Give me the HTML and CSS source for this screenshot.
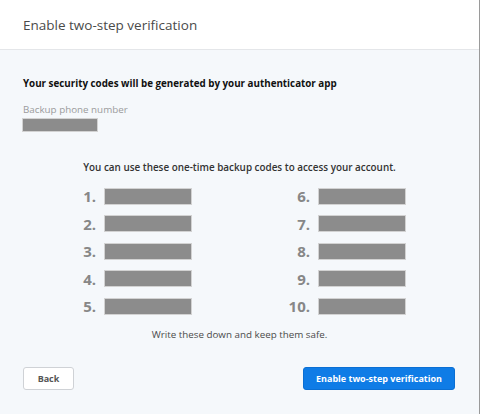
FILE: index.html
```html
<!DOCTYPE html>
<html>
<head>
<meta charset="utf-8">
<link rel="stylesheet" href="styles.css">
</head>
<body>
<div class="dialog">
  <header class="dialog-header">
    <h1 class="title">Enable two-step verification</h1>
  </header>
  <main class="dialog-body">
    <p class="lead">Your security codes will be generated by your authenticator app</p>
    <div class="phone">
      <div class="label">Backup phone number</div>
      <div class="redact phone-redact"></div>
    </div>
    <p class="intro">You can use these one-time backup codes to access your account.</p>
    <div class="codes">
      <div class="code-col">
        <div class="code"><span class="num">1.</span><span class="redact code-redact"></span></div>
        <div class="code"><span class="num">2.</span><span class="redact code-redact"></span></div>
        <div class="code"><span class="num">3.</span><span class="redact code-redact"></span></div>
        <div class="code"><span class="num">4.</span><span class="redact code-redact"></span></div>
        <div class="code"><span class="num">5.</span><span class="redact code-redact"></span></div>
      </div>
      <div class="code-col">
        <div class="code"><span class="num">6.</span><span class="redact code-redact"></span></div>
        <div class="code"><span class="num">7.</span><span class="redact code-redact"></span></div>
        <div class="code"><span class="num">8.</span><span class="redact code-redact"></span></div>
        <div class="code"><span class="num">9.</span><span class="redact code-redact"></span></div>
        <div class="code"><span class="num">10.</span><span class="redact code-redact"></span></div>
      </div>
    </div>
    <p class="note">Write these down and keep them safe.</p>
    <div class="actions">
      <button class="btn btn-secondary">Back</button>
      <button class="btn btn-primary">Enable two-step verification</button>
    </div>
  </main>
</div>
</body>
</html>
```
FILE: styles.css
```css
* { box-sizing: border-box; }
html, body { margin: 0; padding: 0; }
body {
  width: 480px;
  height: 414px;
  overflow: hidden;
  font-family: "Open Sans", "Liberation Sans", sans-serif;
  background: #f5f8fb;
}
.dialog {
  width: 480px;
  height: 414px;
  border-right: 1px solid #9a9a9a;
  background: #f5f8fb;
  display: flex;
  flex-direction: column;
}
.dialog-header {
  height: 50px;
  background: #ffffff;
  border-bottom: 1px solid #e4e6e9;
  display: flex;
  align-items: center;
  padding: 0 23px;
}
.title {
  margin: 0;
  font-size: 13.5px;
  font-weight: 400;
  color: #4a4a4a;
}
.dialog-body {
  flex: 1;
  padding: 26px 23px 0;
  display: flex;
  flex-direction: column;
}
.lead {
  margin: 0;
  font-size: 9.8px;
  line-height: 16px;
  font-weight: 700;
  color: #111;
}
.phone {
  margin-top: 11px;
  display: flex;
  flex-direction: column;
  gap: 1px;
}
.label {
  font-size: 9.8px;
  line-height: 14px;
  color: #9b9b9b;
}
.redact {
  display: block;
  background: #8c8c8c;
  border: 1px solid #d2d2d2;
}
.phone-redact {
  width: 76px;
  height: 14px;
  margin-left: -1px;
}
.intro {
  margin: 27px 0 0;
  text-align: center;
  font-size: 9.9px;
  line-height: 16px;
  font-weight: 600;
  color: #333;
}
.codes {
  margin-top: 13px;
  display: flex;
  justify-content: center;
  gap: 94px;
  padding-right: 1px;
}
.code-col {
  display: flex;
  flex-direction: column;
  gap: 11.5px;
}
.code {
  display: flex;
  align-items: center;
  gap: 8px;
  height: 16px;
}
.num {
  width: 24px;
  text-align: right;
  font-size: 15px;
  font-weight: 700;
  color: #878787;
  line-height: 16px;
}
.code-redact {
  width: 88px;
  height: 17px;
}
.note {
  margin: 13px 0 0;
  text-align: center;
  font-size: 9.8px;
  line-height: 16px;
  color: #4a4a4a;
}
.actions {
  margin-top: 24px;
  display: flex;
  justify-content: space-between;
  padding-right: 1px;
}
.btn {
  height: 23px;
  border-radius: 3px;
  font-family: "Open Sans", "Liberation Sans", sans-serif;
  font-size: 9px;
  font-weight: 700;
  padding: 0;
}
.btn-secondary {
  width: 51px;
  background: #fff;
  border: 1px solid #cfd2d6;
  color: #555;
}
.btn-primary {
  width: 152px;
  background: #0f7ce6;
  border: 1px solid #0b6fd3;
  color: #fff;
}
```
